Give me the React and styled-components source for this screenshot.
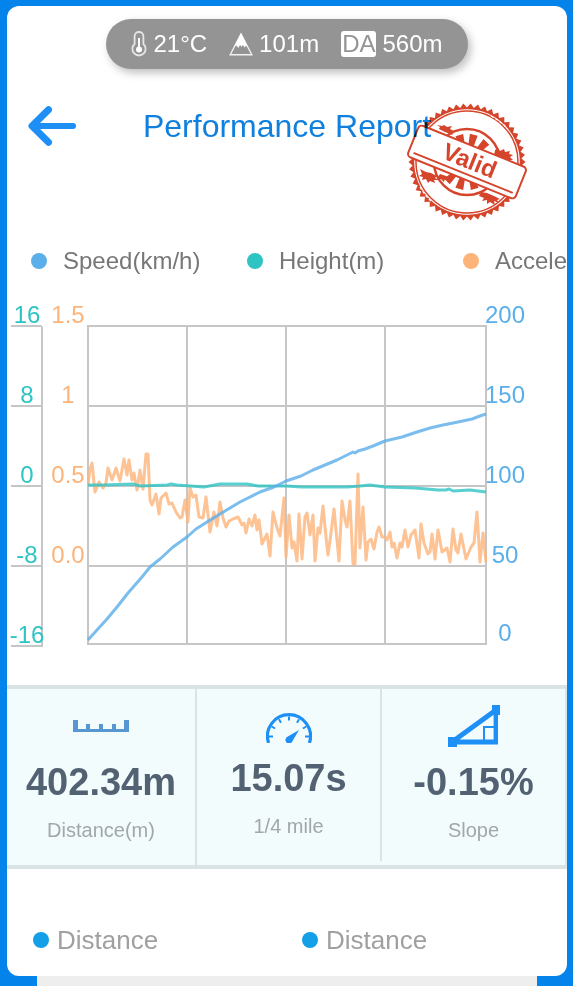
import React from "react";
import styled, { createGlobalStyle } from "styled-components";

const colors = {
  main: "#0483ea",
  title: "#1080de",
  icon: "#1e90f5",
  speed: "#5aaeea",
  height: "#2fc4c4",
  accel: "#fdb47a",
  grid: "#c6c6c6",
  panel: "#f2fcfd",
  panelBorder: "#dae4e6",
  stamp: "#d5452c",
};

// every series is drawn in a 398 x 318 box
const accelPoints =
  "0,158 2,143 4,137 7,166 11,156 15,162 18,157 20,142 24,154 28,142 32,155 36,133 39,149 41,134 44,154 46,147 49,164 52,144 55,163 58,128 60,128 62,174 64,179 68,168 71,188 73,172 78,167 81,178 84,177 88,186 92,192 94,191 97,174 100,196 102,162 105,171 108,169 111,191 115,192 118,171 122,206 126,186 129,200 132,176 135,192 138,201 141,195 145,193 150,191 154,199 156,197 158,207 161,193 164,200 167,189 169,204 171,194 174,218 179,208 182,230 185,186 189,202 192,210 196,172 198,231 201,189 204,222 206,216 209,235 211,188 214,233 217,191 219,187 222,209 225,189 227,235 230,202 232,207 235,180 238,211 240,229 243,207 246,183 251,235 254,175 257,194 259,201 262,175 265,238 267,238 270,148 272,222 275,181 278,234 280,216 283,213 286,223 289,206 291,201 294,211 297,211 299,214 302,206 304,221 306,217 309,232 312,217 314,221 317,204 320,221 323,209 327,204 331,232 333,198 336,217 340,228 342,226 344,208 347,233 350,204 354,226 359,222 362,236 365,203 368,224 370,227 373,208 378,233 383,221 386,217 389,186 392,236 395,207 398,236";
const speedPoints =
  "0,314 9,304 19,293 29,281 40,267 54,251 62,241 72,233 85,221 99,211 108,203 119,196 132,188 152,176 172,166 186,161 198,155 213,150 225,144 237,139 249,134 261,128 265,126 267,127 270,125 277,123 285,120 297,115 314,111 329,106 342,102 355,99 370,96 384,93 392,90 398,88";
const heightPoints =
  "0,159 15,159 45,158 52,160 79,159 83,158 89,159 116,161 132,158 159,158 170,160 198,160 214,161 259,161 272,160 282,159 297,161 327,162 350,164 358,164 361,163 365,165 382,164 398,166";

const legend = [
  { label: "Speed(km/h)", color: colors.speed },
  { label: "Height(m)", color: colors.height },
  { label: "Accele", color: colors.accel },
];

const heightTicks = ["16", "8", "0", "-8", "-16"];
const accelTicks = ["1.5", "1", "0.5", "0.0"];
const speedTicks = ["200", "150", "100", "50", "0"];

function ThermometerIcon() {
  return (
    <svg width="16" height="26" viewBox="0 0 16 26" fill="none">
      <path
        d="M3.6 13V5.2a4.4 4.2 0 0 1 8.8 0V13a6.6 6.6 0 1 1-8.8 0z"
        stroke="#e6e6e6"
        strokeWidth="1.8"
      />
      <path d="M8 7v10" stroke="#fff" strokeWidth="2" />
      <circle cx="8" cy="18.5" r="3" fill="#fff" />
    </svg>
  );
}

function MountainIcon() {
  return (
    <svg width="24" height="24" viewBox="0 0 24 24" fill="none">
      <path d="M12 2L1.2 22.8h21.6z" stroke="#f2f2f2" strokeWidth="1.4" />
      <path
        d="M12 1L5.4 14.5l2.4-1 1.4 2.5 1.9-3 1.4 1.8 1.4-1.8 1.8 2.6 1.1-1.8 1.8 1z"
        fill="#fff"
      />
    </svg>
  );
}

function ArrowIcon() {
  return (
    <svg
      width="48"
      height="40"
      viewBox="0 0 48 40"
      fill="none"
      stroke={colors.icon}
      strokeLinecap="round"
      strokeLinejoin="round"
    >
      <path d="M45 20H5" strokeWidth="6" />
      <path d="M20.5 3.8L4 20l16.5 16.2" strokeWidth="7" />
    </svg>
  );
}

function RulerIcon() {
  return (
    <svg width="56" height="12" viewBox="0 0 56 12" fill="#5896d2">
      <path d="M0 0h5v9h8V4h4v5h9V4h4v5h9V4h4v5h8V0h5v12H0z" />
    </svg>
  );
}

function GaugeIcon() {
  const ticks = [0, 30, 60, 90, 120, 150, 180];
  return (
    <svg width="46" height="34" viewBox="0 -4 46 34" fill="none">
      <path
        d="M2.6 30A21.5 21.5 0 1 1 43.4 30"
        stroke={colors.icon}
        strokeWidth="3.2"
      />
      {ticks.map((deg) => (
        <path
          key={deg}
          d="M3 23.5h4"
          stroke={colors.icon}
          strokeWidth="2"
          transform={`rotate(${deg} 23 23.5)`}
        />
      ))}
      <path
        d="M33 17L26.4 28.2a3.6 3.6 0 1 1-4.6-4.6z"
        fill={colors.icon}
      />
    </svg>
  );
}

function SlopeIcon() {
  return (
    <svg width="52" height="42" viewBox="0 0 52 42" fill="none">
      <path d="M4 37L48 5M6 37h44" stroke={colors.icon} strokeWidth="5" />
      <path d="M47.8 6v33" stroke={colors.icon} strokeWidth="4.4" />
      <path d="M46 22H36v13" stroke={colors.icon} strokeWidth="2" />
      <path d="M44 0h8v10h-8zM0 32h9v10H0z" fill={colors.icon} />
    </svg>
  );
}

function starPoints(teeth, outer, inner) {
  const points = [];
  for (let i = 0; i < teeth * 2; i++) {
    const r = i % 2 ? inner : outer;
    const a = (Math.PI * i) / teeth;
    points.push(`${(r * Math.cos(a)).toFixed(1)},${(r * Math.sin(a)).toFixed(1)}`);
  }
  return points.join(" ");
}

function ValidStamp() {
  const rays = [-16, 14, 44, 164, 196, 226];
  return (
    <Stamp width="120" height="118" viewBox="-60 -59 120 118">
      <polygon points={starPoints(50, 58.5, 54.5)} fill={colors.stamp} />
      <circle r="52.8" fill="#fff" />
      <circle r="51" fill="none" stroke={colors.stamp} strokeWidth="1.5" />
      <circle r="33" fill="none" stroke={colors.stamp} strokeWidth="2.4" />
      {rays.map((deg) => (
        <path
          key={deg}
          d="M-2.4-14h4.8l1.6-14h-8z"
          fill={colors.stamp}
          transform={`rotate(${deg})`}
        />
      ))}
      <g fill={colors.stamp}>
        <path d="M-30-37l5 1 2-1 3 2 5-1-2 3 4 2-3 1 2 3-8-3-6-3 1-2z" />
        <path d="M28-12l3-2 2 3 4-2 1 3 5-1-1 3 4 1-3 2 3 3-4 0 3 4-6-2-6-3-6-3z" />
        <path d="M-47 7l6 3 5 1 6 3-2 2 4 2-5 0 1 3-5-2-2 2-2-4-4 1 1-3-4-1 3-2z" />
        <path d="M-27 12l6 2 7 4-3 2-5-3-1 3-3-3-4 1 1-3z" />
        <path d="M14 30l6 1 7 3 6 3-3 1 2 3-5-2 1 4-5-3-3 2 0-4-5 1 2-3-5-2z" />
      </g>
      <g fill="none" stroke="#fff" strokeWidth="1.2" strokeDasharray="3 2">
        <path d="M24-46l5 3 4 3 4 3 3 4" />
        <path d="M-47 25l3 5 4 5 4 4" />
      </g>
      <g transform="rotate(22)">
        <rect
          x="-58"
          y="-17"
          width="116"
          height="34"
          rx="4"
          fill="#fff"
          stroke={colors.stamp}
          strokeWidth="2"
        />
        <path d="M-53 11.5H54" stroke={colors.stamp} strokeWidth="2" />
        <StampText x="2" y="6">
          Valid
        </StampText>
      </g>
    </Stamp>
  );
}

function Plot() {
  return (
    <PlotArea viewBox="-1 -1 400 320" preserveAspectRatio="none">
      <GridLines d="M0 0H398M0 80H398M0 160H398M0 240H398M0 318H398M0-1V319M99 0V318M198 0V318M297 0V318M398-1V319" />
      <Series points={accelPoints} color={colors.accel} />
      <Series points={heightPoints} color={colors.height} />
      <Series points={speedPoints} color={colors.speed} />
    </PlotArea>
  );
}

function App() {
  return (
    <Page>
      <GlobalStyle />
      <Card>
        <WeatherPill>
          <WeatherItem>
            <ThermometerIcon />
            21°C
          </WeatherItem>
          <WeatherItem>
            <MountainIcon />
            101m
          </WeatherItem>
          <WeatherItem>
            <DaBadge>DA</DaBadge>
            560m
          </WeatherItem>
        </WeatherPill>

        <Header>
          <BackButton aria-label="Back">
            <ArrowIcon />
          </BackButton>
          <Title>Performance Report</Title>
          <ValidStamp />
        </Header>

        <Legend>
          {legend.map((item) => (
            <LegendItem key={item.label}>
              <Dot color={item.color} />
              {item.label}
            </LegendItem>
          ))}
        </Legend>

        <Chart>
          <HeightAxis color={colors.height}>
            {heightTicks.map((tick) => (
              <BoxedTick key={tick}>{tick}</BoxedTick>
            ))}
          </HeightAxis>
          <AccelAxis color={colors.accel}>
            {accelTicks.map((tick) => (
              <Tick key={tick}>{tick}</Tick>
            ))}
          </AccelAxis>
          <Plot />
          <SpeedAxis color={colors.speed}>
            {speedTicks.map((tick) => (
              <Tick key={tick}>{tick}</Tick>
            ))}
          </SpeedAxis>
        </Chart>

        <Stats>
          <Stat>
            <StatIcon>
              <RulerIcon />
            </StatIcon>
            <StatValue>402.34m</StatValue>
            <StatLabel>Distance(m)</StatLabel>
          </Stat>
          <Stat>
            <GaugeBox>
              <GaugeIcon />
            </GaugeBox>
            <StatValue>15.07s</StatValue>
            <StatLabel>1/4 mile</StatLabel>
          </Stat>
          <Stat>
            <StatIcon>
              <SlopeIcon />
            </StatIcon>
            <StatValue>-0.15%</StatValue>
            <StatLabel>Slope</StatLabel>
          </Stat>
        </Stats>

        <Distances>
          <DistanceItem>
            <Dot color="#149fe6" />
            Distance
          </DistanceItem>
          <DistanceItem>
            <Dot color="#149fe6" />
            Distance
          </DistanceItem>
        </Distances>
      </Card>
      <BottomStrip />
    </Page>
  );
}

const GlobalStyle = createGlobalStyle`
  * {
    box-sizing: border-box;
  }
  body {
    margin: 0;
    background: ${colors.main};
    font-family: "Liberation Sans", Arial, sans-serif;
  }
  svg {
    display: block;
    flex-shrink: 0;
  }
`;

const Page = styled.div`
  padding: 6px 6px 0 7px;
`;

const Card = styled.main`
  display: flex;
  flex-direction: column;
  padding-top: 13px;
  background: #fff;
  border-radius: 12px;
  overflow: hidden;
`;

const WeatherPill = styled.div`
  align-self: center;
  display: flex;
  align-items: center;
  gap: 22px;
  height: 50px;
  padding: 0 25px;
  border-radius: 25px;
  background: #949494;
  box-shadow: 3px 4px 8px rgba(0, 0, 0, 0.25);
`;

const WeatherItem = styled.div`
  display: flex;
  align-items: center;
  gap: 6px;
  color: #fff;
  font-size: 24px;
  line-height: 28px;
`;

const DaBadge = styled.span`
  padding: 0 1px;
  border-radius: 3px;
  background: #fff;
  color: #949494;
  line-height: 26px;
`;

const Header = styled.header`
  position: relative;
  display: grid;
  grid-template-columns: 1fr auto 1fr;
  align-items: center;
  margin-top: 37px;
`;

const BackButton = styled.button`
  justify-self: start;
  margin-left: 21px;
  padding: 0;
  border: none;
  background: none;
  cursor: pointer;
`;

const Title = styled.h1`
  margin: 0;
  color: ${colors.title};
  font-size: 32px;
  font-weight: 400;
  line-height: 40px;
`;

const Stamp = styled.svg`
  position: absolute;
  top: -3px;
  right: 40px;
  mix-blend-mode: multiply;
`;

const StampText = styled.text`
  fill: ${colors.stamp};
  font-size: 24px;
  font-weight: 700;
  text-anchor: middle;
`;

const Legend = styled.div`
  display: flex;
  margin-top: 101px;
  padding-left: 24px;
  overflow: hidden;
`;

const LegendItem = styled.div`
  display: flex;
  flex: 0 0 216px;
  align-items: center;
  gap: 16px;
  color: #777;
  font-size: 24px;
  line-height: 28px;
`;

const Dot = styled.span`
  flex-shrink: 0;
  width: 16px;
  height: 16px;
  border-radius: 50%;
  background: ${(props) => props.color};
`;

const Chart = styled.section`
  display: grid;
  grid-template-columns: 32px 44px 1fr 80px;
  align-items: start;
  margin-top: 27px;
  padding-left: 4px;
`;

const HeightAxis = styled.div`
  color: ${(props) => props.color};
  font-size: 24px;
  line-height: 20px;
`;

const AccelAxis = styled(HeightAxis)`
  padding-left: 6px;
`;

const SpeedAxis = styled(HeightAxis)`
  width: 36px;
`;

const Tick = styled.div`
  display: flex;
  align-items: flex-end;
  justify-content: center;
  height: 80px;
  padding-bottom: 2px;
  white-space: nowrap;
  &:first-child {
    height: 25px;
  }
  &:nth-child(5) {
    height: 78px;
  }
`;

const BoxedTick = styled(Tick)`
  padding: 0 0 0 2px;
  border-bottom: 2px solid ${colors.grid};
  border-right: 2px solid ${colors.grid};
  &:first-child {
    border-right-color: transparent;
  }
  &:nth-child(5) {
    height: 80px;
  }
`;

const PlotArea = styled.svg`
  width: 100%;
  height: 320px;
  margin-top: 23px;
`;

const GridLines = styled.path`
  stroke: ${colors.grid};
  stroke-width: 2px;
  vector-effect: non-scaling-stroke;
`;

const Series = styled.polyline`
  fill: none;
  stroke: ${(props) => props.color};
  stroke-width: 3px;
  stroke-linejoin: round;
  stroke-opacity: 0.8;
  vector-effect: non-scaling-stroke;
`;

const Stats = styled.section`
  display: grid;
  grid-template-columns: 190fr 185fr 185fr;
  align-items: start;
  margin-top: 38px;
  border-top: 4px solid ${colors.panelBorder};
  border-bottom: 4px solid ${colors.panelBorder};
  background: ${colors.panel};
`;

const Stat = styled.div`
  display: flex;
  flex-direction: column;
  align-items: center;
  padding: 16px 0 23px;
  border-right: 2px solid ${colors.panelBorder};
`;

const StatIcon = styled.div`
  display: flex;
  align-items: center;
  height: 42px;
`;

const GaugeBox = styled(StatIcon)`
  align-items: flex-end;
  height: 38px;
`;

const StatValue = styled.div`
  margin-top: 13px;
  color: #526272;
  font-size: 38px;
  font-weight: 700;
  line-height: 44px;
`;

const StatLabel = styled.div`
  margin-top: 14px;
  color: #a3a7a8;
  font-size: 20px;
  line-height: 24px;
`;

const Distances = styled.section`
  display: grid;
  grid-template-columns: 1fr 1fr;
  column-gap: 4px;
  padding: 56px 0 21px 26px;
`;

const DistanceItem = styled.div`
  display: flex;
  align-items: center;
  gap: 8px;
  color: #a0a0a0;
  font-size: 26px;
  line-height: 30px;
`;

const BottomStrip = styled.div`
  height: 10px;
  margin: 0 30px;
  background: #eee;
`;

export default App;
